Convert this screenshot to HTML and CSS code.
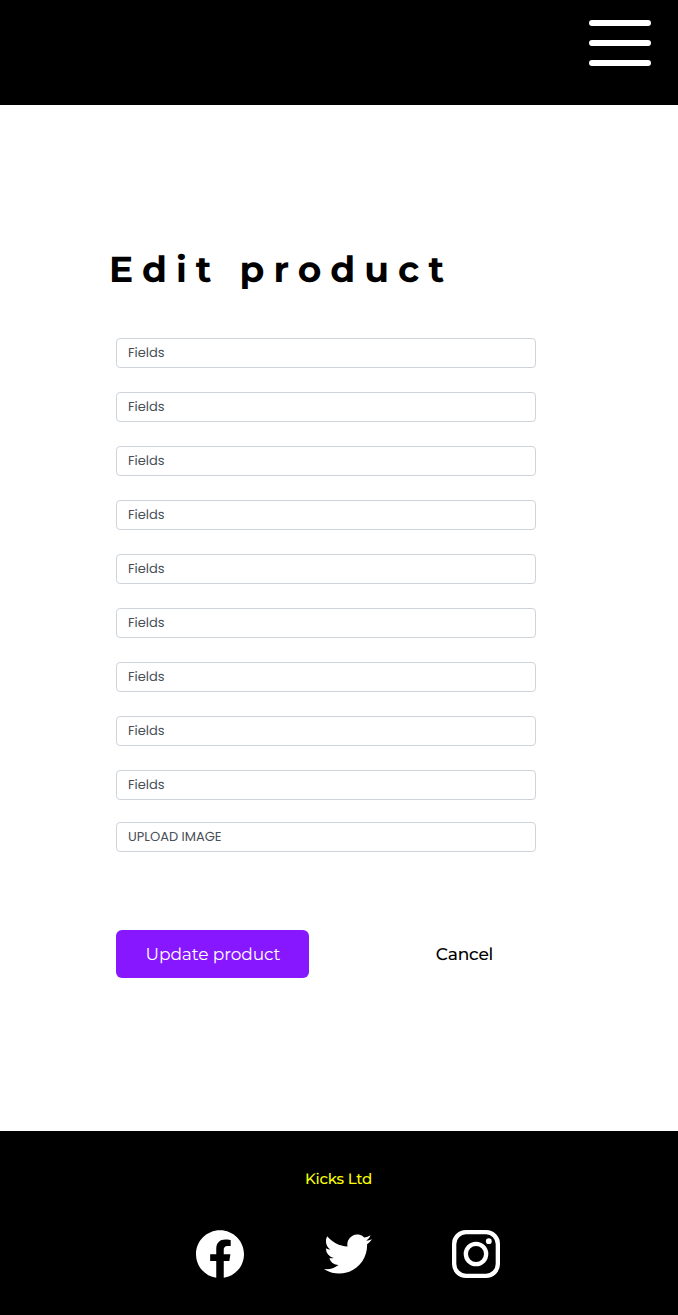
FILE: index.html
```html
<!DOCTYPE html>
<html lang="en">
<head>
<meta charset="utf-8">
<title>Edit product</title>
<link rel="stylesheet" href="styles.css">
</head>
<body>
<header class="topbar">
  <button class="menu" aria-label="Menu"><span class="bar"></span><span class="bar"></span><span class="bar"></span></button>
</header>
<main class="content">
  <h1 class="title">Edit product</h1>
  <form class="form">
    <div class="field">Fields</div>
    <div class="field">Fields</div>
    <div class="field">Fields</div>
    <div class="field">Fields</div>
    <div class="field">Fields</div>
    <div class="field">Fields</div>
    <div class="field">Fields</div>
    <div class="field">Fields</div>
    <div class="field">Fields</div>
    <div class="field upload">UPLOAD IMAGE</div>
    <div class="actions">
      <button type="button" class="btn primary">Update product</button>
      <button type="button" class="btn cancel">Cancel</button>
    </div>
  </form>
</main>
<footer class="footer">
  <p class="company">Kicks Ltd</p>
  <nav class="social">
    <svg class="icon" viewBox="0 0 24 24" aria-label="Facebook"><path d="M24 12.073c0-6.627-5.373-12-12-12s-12 5.373-12 12c0 5.99 4.388 10.954 10.125 11.854v-8.385H7.078v-3.47h3.047V9.43c0-3.007 1.792-4.669 4.533-4.669 1.312 0 2.686.235 2.686.235v2.953H15.83c-1.491 0-1.956.925-1.956 1.874v2.25h3.328l-.532 3.47h-2.796v8.385C19.612 23.027 24 18.062 24 12.073z"/></svg>
    <svg class="icon" viewBox="0 0 24 24" aria-label="Twitter"><path d="M23.953 4.57a10 10 0 01-2.825.775 4.958 4.958 0 002.163-2.723c-.951.555-2.005.959-3.127 1.184a4.92 4.92 0 00-8.384 4.482C7.69 8.095 4.067 6.13 1.64 3.162a4.822 4.822 0 00-.666 2.475c0 1.71.87 3.213 2.188 4.096a4.904 4.904 0 01-2.228-.616v.06a4.923 4.923 0 003.946 4.827 4.996 4.996 0 01-2.212.085 4.936 4.936 0 004.604 3.417 9.867 9.867 0 01-6.102 2.105c-.39 0-.779-.023-1.17-.067a13.995 13.995 0 007.557 2.209c9.053 0 13.998-7.496 13.998-13.985 0-.21 0-.42-.015-.63A9.935 9.935 0 0024 4.59z"/></svg>
    <svg class="icon line" viewBox="0 0 24 24" aria-label="Instagram"><rect x="1.08" y="1.08" width="21.84" height="21.84" rx="5.9"/><circle cx="12" cy="12" r="5.08"/><circle class="dot" cx="18.4" cy="5.6" r="1.44"/></svg>
  </nav>
</footer>
</body>
</html>
```

FILE: styles.css
```css
* { box-sizing: border-box; }
body {
  margin: 0;
  height: 1315px;
  display: flex;
  flex-direction: column;
  background: #fff;
  color: #000;
  font-family: Montserrat, Inter, "Liberation Sans", sans-serif;
  text-rendering: geometricPrecision;
}
.topbar {
  height: 105px;
  padding: 20px 27px;
  display: flex;
  justify-content: flex-end;
  align-items: flex-start;
  background: #000;
}
.menu {
  display: flex;
  flex-direction: column;
  gap: 14px;
  width: 62px;
  padding: 0;
  border: 0;
  background: none;
}
.bar { height: 6px; border-radius: 3px; background: #fff; }
.content { height: 1026px; padding: 141px 142px 0 116px; }
.title {
  margin: 0 0 44px -7px;
  height: 48px;
  font-size: 36px;
  line-height: 48px;
  font-weight: 700;
  letter-spacing: 9px;
  white-space: nowrap;
}
.form { display: flex; flex-direction: column; gap: 24px; }
.field {
  height: 30px;
  padding: 0 11px;
  border: 1px solid #ced4da;
  border-radius: 4px;
  color: #495057;
  font: 13px/28px Poppins, Inter, sans-serif;
}
.upload { margin-top: -2px; }
.actions { display: flex; justify-content: space-between; margin-top: 54px; }
.btn {
  height: 48px;
  padding: 2px 0 0 1px;
  border: 0;
  background: none;
  font-family: inherit;
  font-size: 17px;
  font-weight: 500;
  letter-spacing: -0.2px;
  text-rendering: inherit;
  white-space: nowrap;
}
.primary {
  width: 193px;
  border-radius: 6px;
  background: #8717ff;
  color: #fff;
  font-weight: 400;
  letter-spacing: -0.1px;
}
.cancel { width: 144px; color: #000; }
.footer {
  height: 184px;
  padding-top: 38px;
  background: #000;
  display: flex;
  flex-direction: column;
  align-items: center;
}
.company {
  margin: 0 1px 0 0;
  height: 20px;
  font-size: 15px;
  line-height: 20px;
  font-weight: 500;
  letter-spacing: -0.2px;
  color: #fbff00;
}
.social { display: flex; gap: 80px; margin: 41px 0 0 18px; }
.icon { display: block; width: 48px; height: 48px; fill: #fff; }
.line { fill: none; stroke: #fff; stroke-width: 2.16; }
.dot { fill: #fff; stroke: none; }
```
